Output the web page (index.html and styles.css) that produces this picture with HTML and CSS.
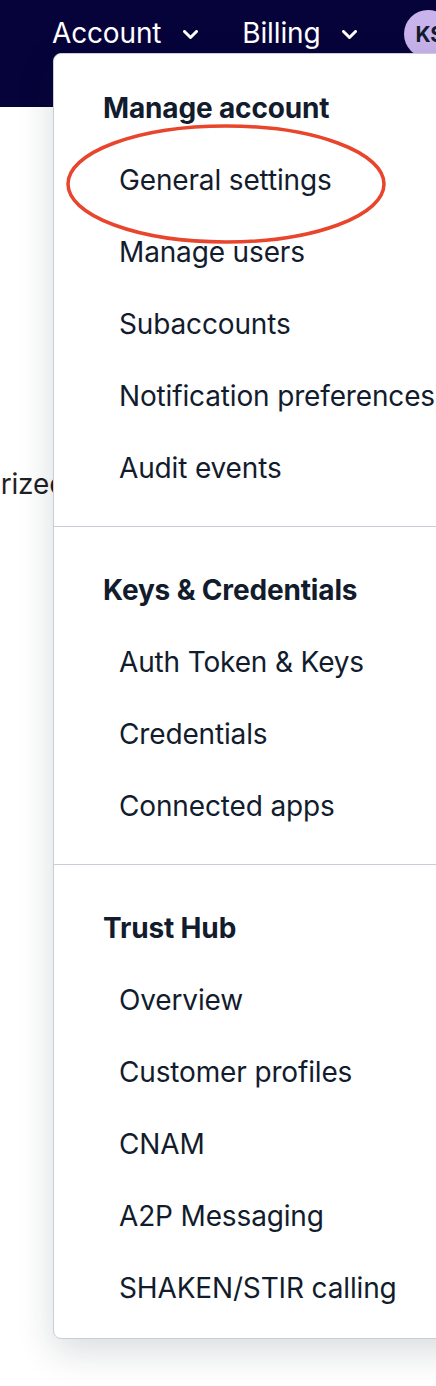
FILE: index.html
```html
<!DOCTYPE html>
<html lang="en">
<head>
    <meta charset="UTF-8">
    <meta name="viewport" content="width=device-width, initial-scale=1.0">
    <title>Account menu</title>
    <link rel="stylesheet" href="styles.css">
</head>
<body>
    <div class="topbar">
        <div class="nav">
            <div class="nav-item">
                <span>Account</span>
                <svg class="chev" width="15" height="9" viewBox="0 0 15 9"><polyline points="1.5,1.5 7.5,7.5 13.5,1.5"/></svg>
            </div>
            <div class="nav-item">
                <span>Billing</span>
                <svg class="chev" width="15" height="9" viewBox="0 0 15 9"><polyline points="1.5,1.5 7.5,7.5 13.5,1.5"/></svg>
            </div>
            <div class="avatar">KS</div>
        </div>
    </div>

    <div class="page">
        <p class="hint">Authorized</p>
    </div>

    <!-- dropdown opened from "Account" -->
    <div class="menu">
        <div class="group">
            <div class="label">Manage account</div>
            <div class="item">General settings</div>
            <div class="item">Manage users</div>
            <div class="item">Subaccounts</div>
            <div class="item">Notification preferences</div>
            <div class="item">Audit events</div>
        </div>
        <div class="sep"></div>
        <div class="group">
            <div class="label">Keys &amp; Credentials</div>
            <div class="item">Auth Token &amp; Keys</div>
            <div class="item">Credentials</div>
            <div class="item">Connected apps</div>
        </div>
        <div class="sep"></div>
        <div class="group">
            <div class="label">Trust Hub</div>
            <div class="item">Overview</div>
            <div class="item">Customer profiles</div>
            <div class="item">CNAM</div>
            <div class="item">A2P Messaging</div>
            <div class="item">SHAKEN/STIR calling</div>
        </div>
    </div>

    <!-- red marker drawn round the first item -->
    <svg class="mark" width="326" height="126" viewBox="0 0 326 126">
        <ellipse cx="163" cy="63" rx="158" ry="58"/>
    </svg>
</body>
</html>
```

FILE: styles.css
```css
*{margin: 0;padding: 0;box-sizing: border-box;}
html,body{overflow: hidden;}
body{font-family: Inter, "Noto Sans", sans-serif;color: #121c2d;background: #fff;height: 1386px;position: relative;letter-spacing: -0.15px;}

.topbar{background: #06033a;height: 107px;}
.nav{display: flex;align-items: center;height: 66px;padding-left: 52px;gap: 44px;}
.nav-item{display: flex;align-items: center;gap: 22px;color: #fff;font-size: 28px;}
.chev{fill: none;stroke: #fff;stroke-width: 3;stroke-linecap: round;stroke-linejoin: round;margin-top: 2px;}
.avatar{width: 48px;height: 48px;border-radius: 50%;background: #c9b3ec;color: #121c2d;font-size: 21px;font-weight: 700;letter-spacing: 0;display: flex;align-items: center;padding-left: 11px;flex-shrink: 0;margin: 0 0 -2px 3px;}

.page{padding-top: 360px;}
.hint{font-size: 28px;color: #1f1f24;margin-left: -77px;white-space: nowrap;}

.menu{position: absolute;top: 53px;left: 53px;width: 440px;background: #fff;border: 1px solid #cacdd8;border-radius: 8px;box-shadow: 0 12px 36px rgba(18,28,45,0.16);padding: 18px 0 14px;}
.label{height: 72px;display: flex;align-items: center;padding-left: 49px;font-size: 28px;font-weight: 700;}
.item{height: 72px;display: flex;align-items: center;padding-left: 65px;font-size: 28px;white-space: nowrap;}
.sep{height: 1px;background: #cacdd8;margin: 22px 0 27px;}

.mark{position: absolute;left: 63px;top: 121px;}
.mark ellipse{fill: none;stroke: #e8452c;stroke-width: 3.5;}
```
